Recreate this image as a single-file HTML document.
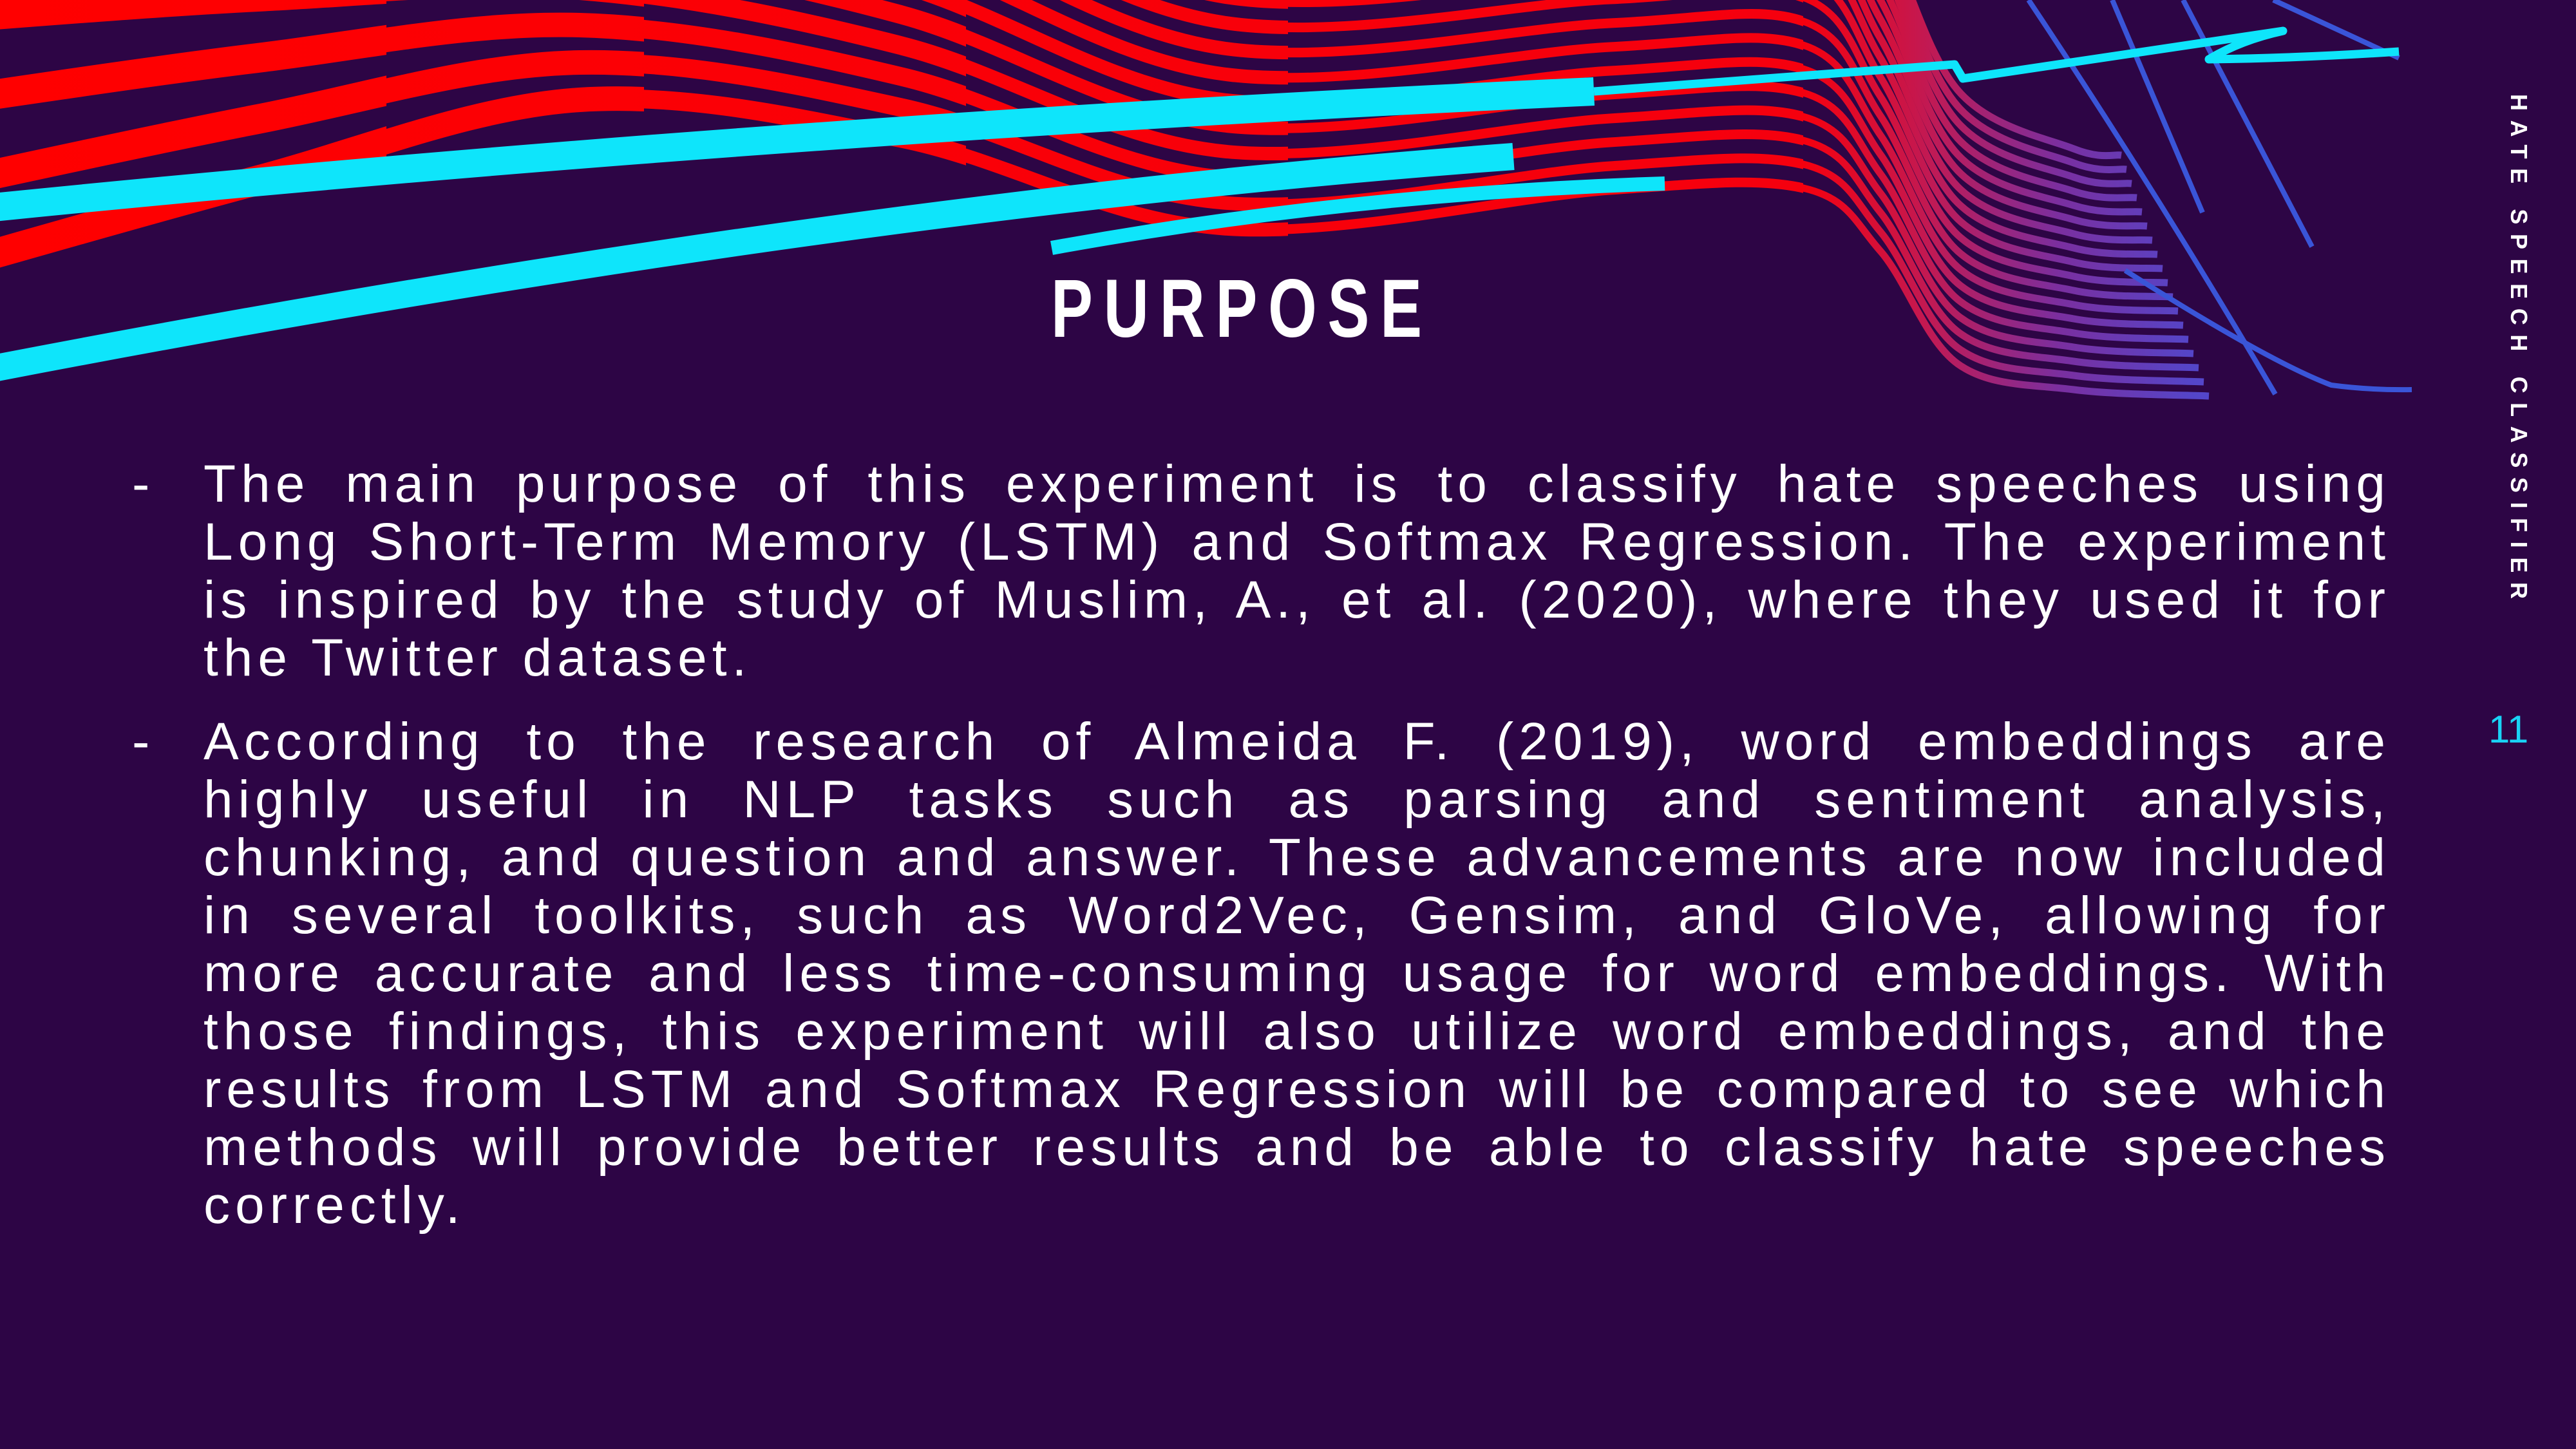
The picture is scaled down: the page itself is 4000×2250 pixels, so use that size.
<!DOCTYPE html>
<html><head><meta charset="utf-8"><style>
html,body{margin:0;padding:0}
body{width:4000px;height:2250px;background:#2d0545;position:relative;overflow:hidden;font-family:"Liberation Sans",sans-serif}
svg{position:absolute;left:0;top:0}
.title{position:absolute;left:1560px;top:405px;width:600px;text-align:center;color:#fff;font-weight:bold;font-size:128px;line-height:150px;letter-spacing:22px;transform:scaleX(0.76);transform-origin:center}
.para{position:absolute;left:316px;width:3396px;color:#fff;font-size:82px;line-height:90px;letter-spacing:8px}
.para div{text-align:justify;text-align-last:justify;white-space:nowrap;height:90px}
.para div.last{text-align-last:left}
.dash{position:absolute;left:205px;color:#fff;font-size:82px;line-height:90px}
.vert{position:absolute;left:3893px;top:146px;writing-mode:vertical-rl;color:#fff;font-weight:bold;font-size:36px;letter-spacing:14.6px;line-height:36px}
.num{position:absolute;left:3864px;top:1098px;color:#19d3f5;font-size:60px;line-height:70px}
</style></head><body>
<svg width="4000" height="2250" viewBox="0 0 4000 2250">
<defs>
<linearGradient id="rg" gradientUnits="userSpaceOnUse" x1="0" y1="0" x2="4000" y2="0">
<stop offset="0" stop-color="#ff0000"/>
<stop offset="0.70" stop-color="#f5000e"/>
<stop offset="0.75" stop-color="#c01a55"/>
<stop offset="0.80" stop-color="#7a2fa0"/>
<stop offset="0.85" stop-color="#5545c8"/>
<stop offset="1" stop-color="#2a60e8"/>
</linearGradient>
<clipPath id="c1"><rect x="-200" y="-500" width="800" height="2000"/></clipPath>
<clipPath id="c2"><rect x="-200" y="-500" width="1200" height="2000"/></clipPath>
<clipPath id="c3"><rect x="-200" y="-500" width="1700" height="2000"/></clipPath>
<clipPath id="c4"><rect x="-200" y="-500" width="2200" height="2000"/></clipPath>
<clipPath id="c5"><rect x="-200" y="-500" width="3000" height="2000"/></clipPath>
</defs>
<g fill="none" stroke="url(#rg)">
<g id="w5" stroke-width="11"></g>
<g id="w4" stroke-width="15" clip-path="url(#c5)"></g>
<g id="w3" stroke-width="21" clip-path="url(#c4)"></g>
<g id="w2" stroke-width="29" clip-path="url(#c3)"></g>
<g id="w1" stroke-width="38" clip-path="url(#c2)"></g>
<g id="w0" stroke-width="46" clip-path="url(#c1)"></g>
</g>
<g fill="none" stroke="#3a55d8" stroke-width="8">
<path d="M3390 0 L3590 383"/>
<path d="M3150 0 Q3350 300 3533 612"/>
<path d="M3280 0 L3420 330"/>
<path d="M3530 0 L3725 90"/>
<path d="M3300 420 Q3520 560 3620 598 Q3680 606 3745 605"/>
</g>
<g fill="none" stroke="#0ee5fb" stroke-linecap="butt">
<path d="M-10 322 Q1200 200 2475 142" stroke-width="44"/>
<path d="M2475 142 Q2800 118 3035 100 L3048 122 Q3300 85 3545 48 Q3480 62 3430 92 Q3580 90 3725 80" stroke-width="13" stroke-linejoin="round"/>
<path d="M-10 572 Q1300 320 2350 243" stroke-width="42"/>
<path d="M1633 385 Q2100 300 2585 285" stroke-width="22"/>
</g>
</svg>
<script>
(function(){
function cr(p){var d='M'+p[0][0].toFixed(1)+' '+p[0][1].toFixed(1);for(var i=0;i<p.length-1;i++){var p0=p[Math.max(i-1,0)],p1=p[i],p2=p[i+1],p3=p[Math.min(i+2,p.length-1)];
var c1=[p1[0]+(p2[0]-p0[0])/6,p1[1]+(p2[1]-p0[1])/6],c2=[p2[0]-(p3[0]-p1[0])/6,p2[1]-(p3[1]-p1[1])/6];
d+=' C'+c1[0].toFixed(1)+' '+c1[1].toFixed(1)+' '+c2[0].toFixed(1)+' '+c2[1].toFixed(1)+' '+p2[0].toFixed(1)+' '+p2[1].toFixed(1);}return d;}
var s='';
for(var k=0;k<18;k++){
var pts=[[-100,420-130*k],[400,280-95*k],[900,155-58*k],[1400,215-48*k],[1900,355-40*k],[2500,295-37*k],[2800,292-37*k],[2920,390-30*k],[3040,565-25*k],[3220,605-22*k],[3430-8*k,615-22*k]];
s+='<path d="'+cr(pts)+'"/>';}
['w0','w1','w2','w3','w4','w5'].forEach(function(id){document.getElementById(id).innerHTML=s;});
})();
</script>
<div class="title">PURPOSE</div>
<div class="dash" style="top:707px">-</div>
<div class="para" style="top:707px">
<div>The main purpose of this experiment is to classify hate speeches using</div>
<div>Long Short-Term Memory (LSTM) and Softmax Regression. The experiment</div>
<div>is inspired by the study of Muslim, A., et al. (2020), where they used it for</div>
<div class="last">the Twitter dataset.</div>
</div>
<div class="dash" style="top:1107px">-</div>
<div class="para" style="top:1107px">
<div>According to the research of Almeida F. (2019), word embeddings are</div>
<div>highly useful in NLP tasks such as parsing and sentiment analysis,</div>
<div>chunking, and question and answer. These advancements are now included</div>
<div>in several toolkits, such as Word2Vec, Gensim, and GloVe, allowing for</div>
<div>more accurate and less time-consuming usage for word embeddings. With</div>
<div>those findings, this experiment will also utilize word embeddings, and the</div>
<div>results from LSTM and Softmax Regression will be compared to see which</div>
<div>methods will provide better results and be able to classify hate speeches</div>
<div class="last">correctly.</div>
</div>
<div class="vert">HATE SPEECH CLASSIFIER</div>
<div class="num">11</div>
</body></html>
